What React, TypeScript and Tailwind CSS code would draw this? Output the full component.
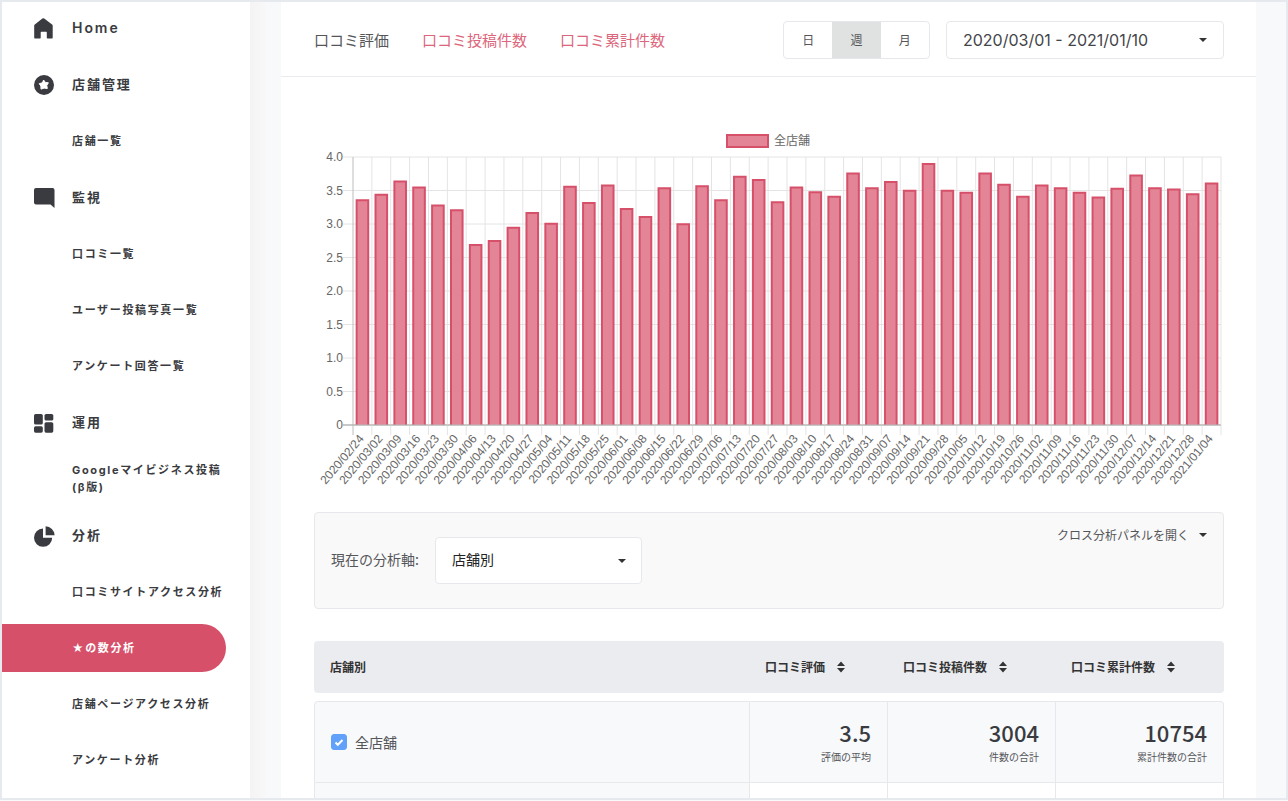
import { useState } from 'react';
import type { ReactNode } from 'react';
import clsx from 'clsx';

type Unit = 'day' | 'week' | 'month';

interface NavGroup {
  label: string;
  icon: ReactNode;
  items: string[];
}

const HomeIcon = () => (
  <svg viewBox="0 0 20 21" className="h-[21px] w-5" fill="currentColor">
    <path d="M8.4.6a1.4 1.4 0 0 1 1.8 0l7.9 6c.4.3.6.7.6 1.2v12c0 .4-.3.7-.7.7h-4.5c-.4 0-.7-.3-.7-.7v-5.4c0-.3-.3-.6-.6-.6H7.3c-.3 0-.6.3-.6.6v5.400c0 .4-.3.7-.7.7H.9c-.4 0-.7-.3-.7-.7v-12c0-.5.2-.9.6-1.2z" />
  </svg>
);

const StarBadgeIcon = () => (
  <svg viewBox="0 0 20 20" className="h-5 w-5">
    <circle cx="10" cy="10" r="10" fill="currentColor" />
    <path d="M9.6 5l1.7 2.4 3.1.4-1.6 2.6.5 3.1-3.2-.4-3.1 1-.1-3.1L5.2 8.700l3.2-.9z" fill="#fff" stroke="#fff" strokeLinejoin="round" />
  </svg>
);

const CommentIcon = () => (
  <svg viewBox="0 0 21 20" className="h-5 w-[21px]" fill="currentColor">
    <path d="M2 0h16.5a2 2 0 0 1 2 2v18l-4-3.5H2a2 2 0 0 1-2-2V2a2 2 0 0 1 2-2z" />
  </svg>
);

const BlocksIcon = () => (
  <svg viewBox="0 0 20 19" className="h-[19px] w-5" fill="currentColor">
    <rect x="0" y="0" width="8.8" height="10.5" rx="1.6" />
    <rect x="10.5" y="0" width="8.8" height="6.5" rx="1.6" />
    <rect x="0" y="12.2" width="8.8" height="6.5" rx="1.6" />
    <rect x="10.5" y="8.2" width="8.8" height="10.5" rx="1.6" />
  </svg>
);

const PieIcon = () => (
  <svg viewBox="0 0 21 21" className="h-[21px] w-[21px]" fill="currentColor">
    <path d="M9 2.6v9.2h9.2A9.1 9.1 0 1 1 9 2.6z" />
    <path d="M11.6.3a9.2 9.2 0 0 1 9 9h-9z" />
  </svg>
);

const NAV: NavGroup[] = [
  { label: 'Home', icon: <HomeIcon />, items: [] },
  { label: '店舗管理', icon: <StarBadgeIcon />, items: ['店舗一覧'] },
  { label: '監視', icon: <CommentIcon />, items: ['口コミ一覧', 'ユーザー投稿写真一覧', 'アンケート回答一覧'] },
  { label: '運用', icon: <BlocksIcon />, items: ['Googleマイビジネス投稿(β版)'] },
  {
    label: '分析',
    icon: <PieIcon />,
    items: ['口コミサイトアクセス分析', '★の数分析', '店舗ページアクセス分析', 'アンケート分析'],
  },
];

const TABS = ['口コミ評価', '口コミ投稿件数', '口コミ累計件数'];

const UNITS: { id: Unit; label: string }[] = [
  { id: 'day', label: '日' },
  { id: 'week', label: '週' },
  { id: 'month', label: '月' },
];

// weekly average rating, first week starts 2020/02/24
const RATINGS = [
  3.37, 3.45, 3.65, 3.56, 3.29, 3.22, 2.7, 2.76, 2.96, 3.18, 3.02, 3.57, 3.33, 3.59, 3.24, 3.12,
  3.55, 3.01, 3.58, 3.37, 3.72, 3.67, 3.34, 3.56, 3.49, 3.42, 3.77, 3.55, 3.64, 3.51, 3.91, 3.51,
  3.48, 3.77, 3.6, 3.42, 3.59, 3.55, 3.48, 3.41, 3.54, 3.74, 3.55, 3.53, 3.46, 3.62,
];

const SUMMARY = [
  { value: '3.5', note: '評価の平均' },
  { value: '3004', note: '件数の合計' },
  { value: '10754', note: '累計件数の合計' },
];

function weekLabel(index: number) {
  const d = new Date(Date.UTC(2020, 1, 24 + index * 7));
  return d.toISOString().slice(0, 10).replace(/-/g, '/');
}

function Caret({ className }: { className?: string }) {
  return (
    <svg viewBox="0 0 8 4" className={clsx('h-1 w-2', className)} fill="#333">
      <path d="M0 0h8L4 4z" />
    </svg>
  );
}

function SortIcon() {
  return (
    <svg viewBox="0 0 8 12" className="h-3 w-2" fill="#333">
      <path d="M4 .5l4 4.5H0zM4 11.5l4-4.5H0z" />
    </svg>
  );
}

function Sidebar() {
  const [active, setActive] = useState('★の数分析');

  return (
    <nav className="flex w-[248px] shrink-0 flex-col gap-[9px] overflow-hidden bg-white pt-0.5 font-['Inter','Noto_Sans_CJK_JP',sans-serif] text-[#3a3b40]">
      {NAV.map((group) => (
        <div key={group.label} className="flex flex-col gap-2">
          <a
            href="#"
            className="flex h-12 shrink-0 items-center pl-8 text-[13px] font-bold tracking-[0.15em]"
          >
            <span className="w-[38px]">{group.icon}</span>
            <span className={clsx(group.label === 'Home' && 'text-sm font-semibold')}>{group.label}</span>
          </a>
          {group.items.map((item) => (
            <a
              key={item}
              href="#"
              onClick={() => setActive(item)}
              className={clsx(
                'mr-6 flex h-12 shrink-0 items-center rounded-r-full pl-[70px] text-[11px] leading-[17px] font-bold tracking-[0.15em]',
                active === item && 'bg-[#d6506a] text-white',
              )}
            >
              {item}
            </a>
          ))}
        </div>
      ))}
    </nav>
  );
}

function RatingChart() {
  const left = 39;
  const right = 907;
  const top = 27;
  const bottom = 295;
  const step = (right - left) / RATINGS.length;
  const y = (v: number) => bottom - (v / 4) * (bottom - top);
  const barWidth = step * 0.72;

  return (
    <svg viewBox="0 0 910 360" className="block h-auto w-full" role="img" aria-label="口コミ評価" fontSize="12" fill="#666">
      <rect x="413" y="5" width="41" height="12" fill="#e38597" stroke="#d6506a" strokeWidth="2" />
      <text x="460" y="15">全店舗</text>

      {[0, 0.5, 1, 1.5, 2, 2.5, 3, 3.5, 4].map((v) => (
        <g key={v}>
          <line x1={left - 10} x2={right} y1={y(v)} y2={y(v)} stroke={v === 0 ? '#b5b5b5' : '#e4e4e4'} />
          <text x={left - 10} y={y(v) + 4} textAnchor="end" className="font-['Liberation_Sans',sans-serif]">
            {v === 0 ? '0' : v.toFixed(1)}
          </text>
        </g>
      ))}
      {[...RATINGS, 0].map((_, i) => (
        <line
          key={i}
          x1={left + i * step}
          x2={left + i * step}
          y1={top}
          y2={bottom + 10}
          stroke={i === 0 ? '#bdbdbd' : '#e4e4e4'}
        />
      ))}

      {RATINGS.map((v, i) => {
        const x = left + (i + 0.5) * step;
        const x1 = x - barWidth / 2 + 1;
        const x2 = x + barWidth / 2 - 1;
        return (
          <g key={i}>
            <path
              d={`M${x1} ${bottom}V${y(v) + 1}H${x2}V${bottom}`}
              fill="#e38597"
              stroke="#d6506a"
              strokeWidth="2"
            />
            <text
              textAnchor="end"
              transform={`translate(${x + 2} ${bottom + 14}) rotate(-50)`}
              className="font-['Liberation_Sans',sans-serif]"
            >
              {weekLabel(i)}
            </text>
          </g>
        );
      })}
      <line x1={left - 10} x2={right} y1={bottom} y2={bottom} stroke="#b5b5b5" />
    </svg>
  );
}

function AxisPanel() {
  return (
    <div className="mt-[22px] flex justify-between rounded border border-[#e6e8eb] bg-[#f9f9f9] px-4 pt-4 pb-6">
      <div className="flex items-center pt-2">
        <label htmlFor="axis" className="pb-1 text-sm">現在の分析軸:</label>
        <div className="relative ml-4">
          <select
            id="axis"
            className="h-[47px] w-[207px] appearance-none rounded border border-[#e6e8eb] bg-white px-4 pb-1 text-sm text-[#222]"
          >
            <option>店舗別</option>
          </select>
          <Caret className="pointer-events-none absolute top-[22px] right-4" />
        </div>
      </div>
      <button type="button" className="flex items-center gap-2.5 self-start text-xs leading-3">
        クロス分析パネルを開く
        <Caret />
      </button>
    </div>
  );
}

function SummaryTable() {
  return (
    <table className="mt-8 w-full table-fixed border-separate border-spacing-0">
      <colgroup>
        <col />
        <col className="w-[138px]" />
        <col className="w-[168px]" />
        <col className="w-[168px]" />
      </colgroup>
      <thead className="text-left text-xs text-[#333]">
        <tr className="h-[52px]">
          <th className="rounded-l bg-[#ebecf0] px-4 font-bold">店舗別</th>
          {TABS.map((label) => (
            <th key={label} className="bg-[#ebecf0] pl-[15px] font-bold last:rounded-r">
              <button type="button" className="flex items-center gap-3">
                {label}
                <SortIcon />
              </button>
            </th>
          ))}
        </tr>
        <tr aria-hidden="true">
          <td colSpan={4} className="h-2 p-0" />
        </tr>
      </thead>
      <tbody>
        <tr className="h-[82px] bg-[#f8f9fb]">
          <td className="rounded-tl border border-[#e6e8eb] px-4">
            <label className="flex items-center gap-2 text-sm">
              <span className="relative flex h-4 w-4">
                <input
                  type="checkbox"
                  defaultChecked
                  className="peer h-4 w-4 appearance-none rounded-[3px] border border-[#cbd0d8] bg-white checked:border-[#62a1f9] checked:bg-[#62a1f9]"
                />
                <svg viewBox="0 0 16 16" className="pointer-events-none absolute inset-0 hidden h-4 w-4 peer-checked:block" fill="none" stroke="#fff" strokeWidth="2">
                  <path d="M4.5 8.5l2.3 2.3 4.7-4.8" />
                </svg>
              </span>
              全店舗
            </label>
          </td>
          {SUMMARY.map((s) => (
            <td key={s.note} className="border-y border-r border-[#e6e8eb] px-4 text-right last:rounded-tr">
              <div className="text-[22px] leading-[30px] font-medium text-[#3a3b40]">{s.value}</div>
              <div className="text-[10px] leading-5">{s.note}</div>
            </td>
          ))}
        </tr>
        <tr className="h-[82px]">
          <td className="border-x border-b border-[#e6e8eb] bg-[#f8f9fb]" />
          <td className="border-r border-b border-[#e6e8eb]" />
          <td className="border-r border-b border-[#e6e8eb]" />
          <td className="border-r border-b border-[#e6e8eb]" />
        </tr>
      </tbody>
    </table>
  );
}

export default function App() {
  const [tab, setTab] = useState(TABS[0]);
  const [unit, setUnit] = useState<Unit>('week');

  return (
    <div className="h-screen bg-[#f8f9fb] pb-px font-['Noto_Sans_CJK_JP',sans-serif] text-[#55565a]">
      <div className="flex h-full overflow-hidden border-2 border-[#e6e9ee]">
        <Sidebar />
        <div className="w-4 shrink-0 bg-linear-to-r from-[#f4f4f4] to-[#f8f8f9]" />

        <main className="mr-[30px] ml-[15px] min-w-0 flex-1 overflow-hidden bg-white">
          <header className="flex h-[75px] items-center justify-between border-b border-[#e9ebef] pt-0.5 pr-8 pl-[33px]">
            <div className="flex gap-[33px]">
              {TABS.map((label) => (
                <button
                  key={label}
                  type="button"
                  onClick={() => setTab(label)}
                  className={clsx('text-[15px]', tab === label ? 'text-[#55565a]' : 'text-[#dc667c]')}
                >
                  {label}
                </button>
              ))}
            </div>

            <div className="flex gap-4">
              <div className="flex h-[38px] w-[147px] overflow-hidden rounded border border-[#e6e8eb]">
                {UNITS.map((u) => (
                  <button
                    key={u.id}
                    type="button"
                    onClick={() => setUnit(u.id)}
                    className={clsx('flex-1 text-xs', unit === u.id && 'bg-[#e0e2e1]')}
                  >
                    {u.label}
                  </button>
                ))}
              </div>
              <button
                type="button"
                className="flex h-[38px] w-[278px] items-center justify-between rounded border border-[#e6e8eb] px-4 font-['Inter',sans-serif] text-base text-[#444549]"
              >
                2020/03/01 - 2021/01/10
                <Caret />
              </button>
            </div>
          </header>

          <div className="pt-[53px] pr-8 pl-[33px]">
            <RatingChart />
            <AxisPanel />
            <SummaryTable />
          </div>
        </main>
      </div>
    </div>
  );
}
